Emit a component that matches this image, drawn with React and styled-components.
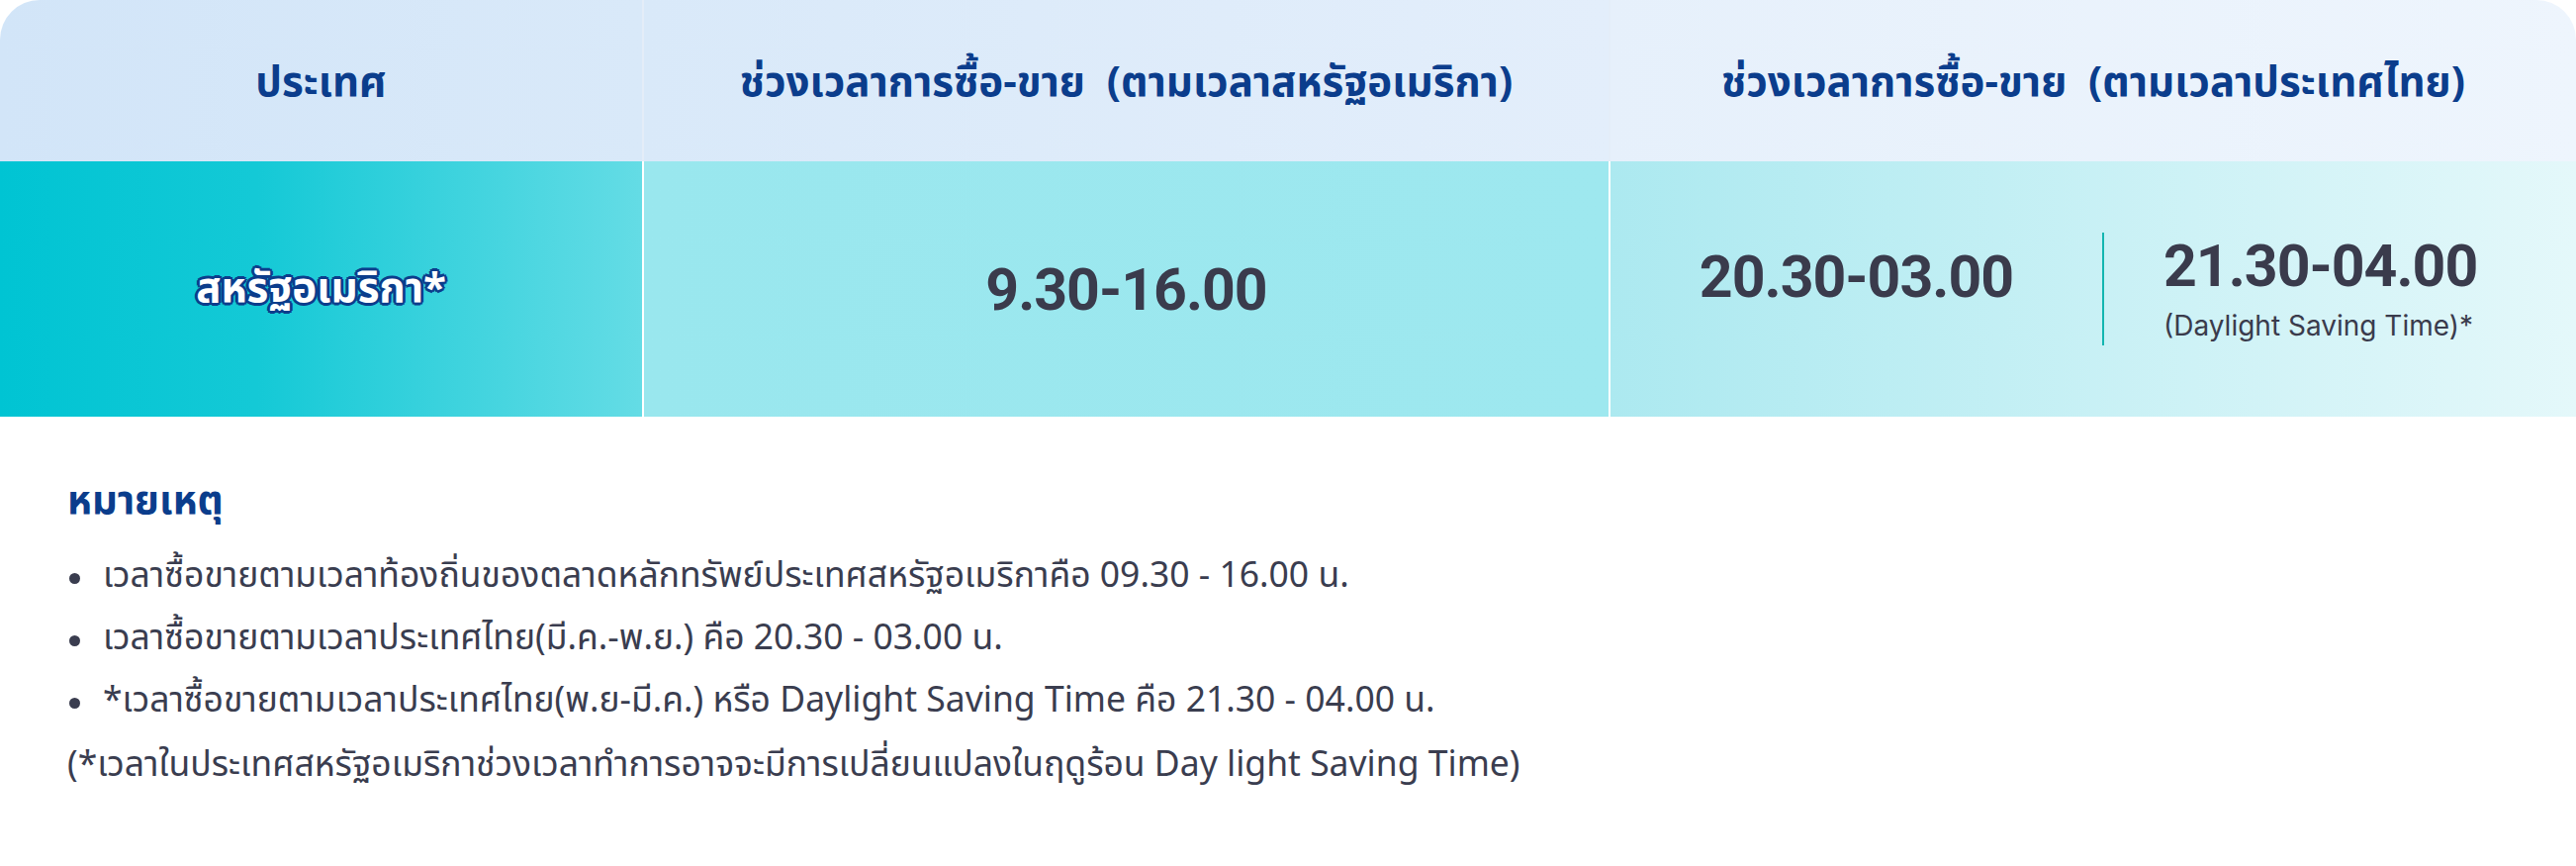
import React from "react";
import styled, { createGlobalStyle } from "styled-components";

const GlobalStyle = createGlobalStyle`
  body {
    margin: 0;
    background: #ffffff;
    font-family: "Noto Sans Thai", "Noto Sans", Inter, sans-serif;
  }
`;

const Page = styled.div`
  width: 2604px;
  height: 875px;
  background: #ffffff;
`;

const Table = styled.div`
  display: grid;
  grid-template-columns: 649px 977px 978px;
  grid-template-rows: 163px 258px;
  border-radius: 40px 40px 0 0;
  overflow: hidden;
`;

const HeadCell = styled.div`
  display: flex;
  align-items: center;
  justify-content: center;
  padding-top: 4px;
  background: ${(p) => p.bg};
  border-left: ${(p) => (p.first ? "none" : "2px solid #e4edf8")};
  color: #0b3d8c;
  font-size: 42px;
  font-weight: 700;
  white-space: pre;
`;

const BodyCell = styled.div`
  display: flex;
  align-items: center;
  justify-content: center;
  background: ${(p) => p.bg};
  border-left: ${(p) => (p.first ? "none" : "2px solid #ffffff")};
`;

const Country = styled.span`
  color: #ffffff;
  font-size: 42px;
  font-weight: 700;
  text-shadow:
    3px 0 0 #0b3d8c, -3px 0 0 #0b3d8c, 0 3px 0 #0b3d8c, 0 -3px 0 #0b3d8c,
    2px 2px 0 #0b3d8c, -2px 2px 0 #0b3d8c, 2px -2px 0 #0b3d8c, -2px -2px 0 #0b3d8c;
`;

const Time = styled.div`
  color: #3a3b4c;
  font-family: Roboto, "Noto Sans", sans-serif;
  font-size: 59px;
  font-weight: 700;
  letter-spacing: -1px;
  line-height: 1;
`;

const Split = styled.div`
  display: flex;
  align-items: center;
  width: 100%;
  height: 100%;
`;

const LeftHalf = styled.div`
  width: 497px;
  display: flex;
  justify-content: center;
  margin-top: -26px;
`;

const RightHalf = styled.div`
  flex: 1;
  display: flex;
  flex-direction: column;
  align-items: flex-start;
  padding-left: 60px;
`;

const Divider = styled.div`
  width: 2px;
  height: 114px;
  background: #12b5b0;
`;

const Sub = styled.div`
  color: #3a3b4c;
  font-family: Inter, "Noto Sans", sans-serif;
  font-size: 28px;
  margin-top: 14px;
`;

const Notes = styled.div`
  padding: 56px 68px 0;
  color: #3a3d4f;
`;

const NotesTitle = styled.h3`
  margin: 0 0 14px;
  font-size: 40px;
  font-weight: 700;
  color: #0b3d8c;
`;

const List = styled.ul`
  margin: 0;
  padding: 0;
  list-style: none;
`;

const Item = styled.li`
  display: flex;
  align-items: center;
  font-size: 35.5px;
  line-height: 63px;

  &::before {
    content: "";
    width: 11px;
    height: 11px;
    border-radius: 50%;
    background: #3a3d4f;
    margin: 4px 23px 0 2px;
    flex-shrink: 0;
  }
`;

const Footnote = styled.div`
  font-size: 35.5px;
  line-height: 66px;
`;

export default function App() {
  return (
    <Page>
      <GlobalStyle />
      <Table>
        <HeadCell first bg="linear-gradient(90deg, #d2e5f8, #d9e9f9)">ประเทศ</HeadCell>
        <HeadCell bg="linear-gradient(90deg, #d9e9f9, #e3eefb)">ช่วงเวลาการซื้อ-ขาย  (ตามเวลาสหรัฐอเมริกา)</HeadCell>
        <HeadCell bg="linear-gradient(90deg, #e6f0fb, #eef5fd)">ช่วงเวลาการซื้อ-ขาย  (ตามเวลาประเทศไทย)</HeadCell>

        <BodyCell first bg="linear-gradient(90deg, #00c4d3 0%, #14c9d6 40%, #64dce5 100%)">
          <Country>สหรัฐอเมริกา*</Country>
        </BodyCell>
        <BodyCell bg="linear-gradient(90deg, #99e7ee, #9ee8ef)">
          <Time>9.30-16.00</Time>
        </BodyCell>
        <BodyCell bg="linear-gradient(90deg, #ace9f0, #e4f8fa)">
          <Split>
            <LeftHalf>
              <Time>20.30-03.00</Time>
            </LeftHalf>
            <Divider />
            <RightHalf>
              <Time>21.30-04.00</Time>
              <Sub>(Daylight Saving Time)*</Sub>
            </RightHalf>
          </Split>
        </BodyCell>
      </Table>

      <Notes>
        <NotesTitle>หมายเหตุ</NotesTitle>
        <List>
          <Item>เวลาซื้อขายตามเวลาท้องถิ่นของตลาดหลักทรัพย์ประเทศสหรัฐอเมริกาคือ 09.30 - 16.00 น.</Item>
          <Item>เวลาซื้อขายตามเวลาประเทศไทย(มี.ค.-พ.ย.) คือ 20.30 - 03.00 น.</Item>
          <Item>*เวลาซื้อขายตามเวลาประเทศไทย(พ.ย-มี.ค.) หรือ Daylight Saving Time คือ 21.30 - 04.00 น.</Item>
        </List>
        <Footnote>(*เวลาในประเทศสหรัฐอเมริกาช่วงเวลาทำการอาจจะมีการเปลี่ยนแปลงในฤดูร้อน Day light Saving Time)</Footnote>
      </Notes>
    </Page>
  );
}
